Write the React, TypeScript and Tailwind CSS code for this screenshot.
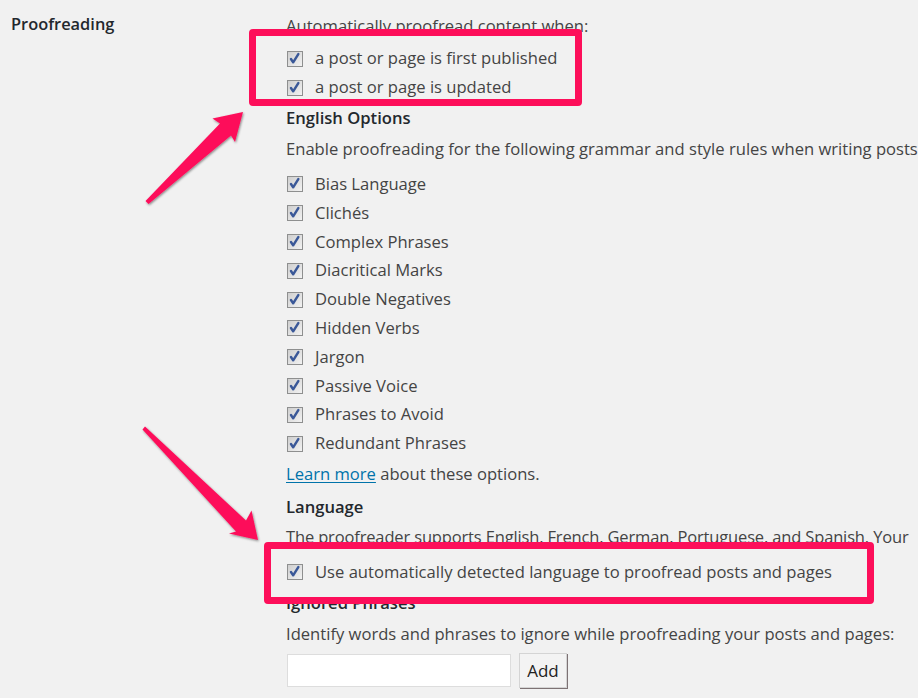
import React from "react";

const font = { fontFamily: '"Open Sans", "Noto Sans", sans-serif' };

function Box() {
  return (
    <span className="relative inline-block w-[16px] h-[16px] border border-[#8e8f8f] bg-gradient-to-br from-[#cfcfcf] to-[#f2f2f2] shrink-0">
      <svg viewBox="0 0 16 16" className="absolute left-0 top-0 w-[14px] h-[14px]">
        <path d="M3.4 8 L5.9 11.8 L11.8 2.4" fill="none" stroke="#3a5898" strokeWidth="2.8" strokeLinecap="round" strokeLinejoin="round" />
      </svg>
    </span>
  );
}

function Check({ label, h = "h-[29px]" }: { label: string; h?: string }) {
  return (
    <div className={`flex items-center ${h} pl-px`}>
      <Box />
      <span className="ml-[12px]">{label}</span>
    </div>
  );
}

const rules = [
  "Bias Language",
  "Clichés",
  "Complex Phrases",
  "Diacritical Marks",
  "Double Negatives",
  "Hidden Verbs",
  "Jargon",
  "Passive Voice",
  "Phrases to Avoid",
  "Redundant Phrases",
];

export default function App() {
  return (
    <div
      className="relative w-[918px] h-[698px] overflow-hidden bg-[#f1f1f1] text-[#444] text-[16.6px] whitespace-nowrap"
      style={font}
    >
      <div className="flex">
        <div className="w-[286px] shrink-0 pl-[11px] pt-[10px]">
          <div className="h-[29px] flex items-center font-semibold text-[#23282d] text-[16.4px]">Proofreading</div>
        </div>
        <div className="flex-1 pt-[12px]">
          <div className="h-[29px] flex items-center">Automatically proofread content when:</div>
          <div className="mt-[3px]">
            <Check label="a post or page is first published" />
            <Check label="a post or page is updated" />
          </div>
          <div className="mt-[2px] h-[29px] flex items-center font-semibold text-[#23282d]">English Options</div>
          <div className="mt-[2px] h-[29px] flex items-center">
            Enable proofreading for the following grammar and style rules when writing posts
          </div>
          <div className="mt-[6px]">
            {rules.map((r) => (
              <Check key={r} label={r} h="h-[28.8px]" />
            ))}
          </div>
          <div className="mt-[2px] h-[29px] flex items-center">
            <a className="text-[#0073aa] underline underline-offset-2">Learn more</a>
            <span>&nbsp;about these options.</span>
          </div>
          <div className="mt-[4px] h-[29px] flex items-center font-semibold text-[#23282d]">Language</div>
          <div className="mt-[1px] h-[29px] flex items-center text-[16.5px] tracking-[-0.15px]">
            The proofreader supports English, French, German, Portuguese, and Spanish. Your
          </div>
          <div className="mt-[6px]">
            <Check label="Use automatically detected language to proofread posts and pages" />
          </div>
          <div className="mt-[2px] h-[29px] flex items-center font-semibold text-[#23282d]">Ignored Phrases</div>
          <div className="mt-[2px] h-[29px] flex items-center">
            Identify words and phrases to ignore while proofreading your posts and pages:
          </div>
          <div className="mt-[5px] flex items-start">
            <div className="ml-px w-[224px] h-[33px] bg-white border border-[#dddddd]" />
            <button className="ml-[8px] -mt-px w-[48px] h-[35px] bg-[#f3f3f3] border border-[#d4d4d4] shadow-[1px_1px_0_#7d7274] text-[#222] text-[17px] flex items-center justify-center">
              Add
            </button>
          </div>
        </div>
      </div>

      {/* highlight boxes */}
      <div className="absolute left-[249px] top-[29px] w-[333px] h-[77px] border-[7px] border-[#fd0f5a] rounded-[4px]" />
      <div className="absolute left-[264px] top-[542px] w-[610px] h-[62px] border-[7px] border-[#fd0f5a] rounded-[4px]" />

      {/* arrows */}
      <svg className="absolute left-0 top-0 pointer-events-none" width="918" height="698">
        <defs>
          <filter id="sh" x="-20%" y="-20%" width="140%" height="140%">
            <feDropShadow dx="0.8" dy="1.2" stdDeviation="0.8" floodColor="#000" floodOpacity="0.45" />
          </filter>
        </defs>
        <polygon
          filter="url(#sh)"
          fill="#fd0f5a"
          points="243,112 212.5,118.5 220,123.5 145.5,201 148.5,204 231,135.5 235,142"
        />
        <polygon
          filter="url(#sh)"
          fill="#fd0f5a"
          points="258,540 251.5,510.5 246,520.5 145,426.5 142.5,429.5 236,531.5 229,533.5"
        />
      </svg>
    </div>
  );
}
